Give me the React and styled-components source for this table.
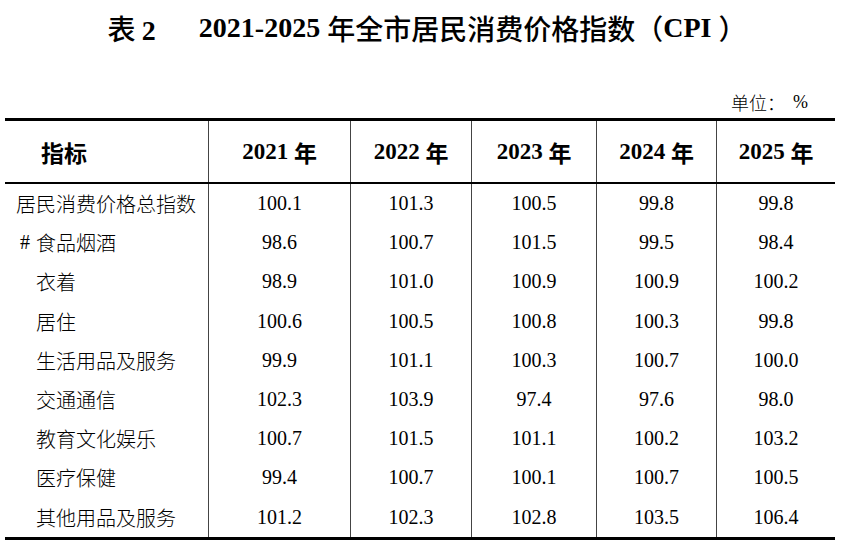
import React from 'react'
import styled, { createGlobalStyle } from 'styled-components'

const GlobalStyle = createGlobalStyle`
  html, body {
    margin: 0;
    padding: 0;
    background: #fff;
  }
  body {
    font-family: "Noto Sans CJK SC", sans-serif;
    color: #000;
  }
`

const COLS = '203px 142px 121px 125px 120px 119px'

const Page = styled.div`
  width: 852px;
  height: 541px;
  box-sizing: border-box;
  padding: 0 17px 0 5px;
  overflow: hidden;
`

const Title = styled.h1`
  margin: 0;
  height: 60px;
  box-sizing: border-box;
  padding: 0 0 4px 14px;
  display: flex;
  align-items: center;
  justify-content: center;
  font-family: "Noto Sans CJK SC", sans-serif;
  font-size: 28px;
  font-weight: 500;
  white-space: pre;
`

const Latin = styled.span`
  font-family: "Liberation Serif", serif;
  font-weight: ${p => (p.$bold ? 700 : 400)};
`

const TableNo = styled.span`
  margin-right: 43px;
`

const Unit = styled.div`
  height: 58px;
  box-sizing: border-box;
  display: flex;
  justify-content: flex-end;
  align-items: flex-end;
  padding: 0 27px 5px 0;
  font-size: 18px;
  font-weight: 300;
  line-height: 22px;

  ${Latin} {
    margin-left: 8px;
  }
`

const Table = styled.div`
  border-top: 3px solid #000;
  border-bottom: 3px solid #000;
`

const HeadRow = styled.div`
  display: grid;
  grid-template-columns: ${COLS};
  height: 63px;
  box-sizing: border-box;
  border-bottom: 2px solid #000;
`

const Row = styled.div`
  display: grid;
  grid-template-columns: ${COLS};
  height: 39.2px;
`

const Cell = styled.div`
  display: flex;
  align-items: center;
  justify-content: center;
  border-left: 1px solid #444;
  white-space: pre;

  &:first-child {
    border-left: none;
  }
`

const HeadCell = styled(Cell)`
  font-size: 23px;
  font-weight: 700;
`

const HeadLabel = styled(HeadCell)`
  justify-content: flex-start;
  padding-left: 36px;
`

const Label = styled(Cell)`
  justify-content: flex-start;
  padding-left: ${p => (p.$indent ? 31 : 11)}px;
  font-size: 20px;
  font-weight: 300;
`

const Hash = styled.span`
  display: inline-block;
  width: 20px;
  box-sizing: border-box;
  padding-left: 4px;
  margin-left: -20px;
  font-family: "Liberation Serif", serif;
  font-weight: 400;
`

const Num = styled(Cell)`
  font-family: "Liberation Serif", serif;
  font-size: 20px;
`

const years = ['2021', '2022', '2023', '2024', '2025']

const rows = [
  ['居民消费价格总指数', 0, ['100.1', '101.3', '100.5', '99.8', '99.8']],
  ['食品烟酒', 2, ['98.6', '100.7', '101.5', '99.5', '98.4']],
  ['衣着', 1, ['98.9', '101.0', '100.9', '100.9', '100.2']],
  ['居住', 1, ['100.6', '100.5', '100.8', '100.3', '99.8']],
  ['生活用品及服务', 1, ['99.9', '101.1', '100.3', '100.7', '100.0']],
  ['交通通信', 1, ['102.3', '103.9', '97.4', '97.6', '98.0']],
  ['教育文化娱乐', 1, ['100.7', '101.5', '101.1', '100.2', '103.2']],
  ['医疗保健', 1, ['99.4', '100.7', '100.1', '100.7', '100.5']],
  ['其他用品及服务', 1, ['101.2', '102.3', '102.8', '103.5', '106.4']],
]

export default function App() {
  return (
    <Page>
      <GlobalStyle />
      <Title>
        <TableNo>
          表 <Latin $bold>2</Latin>
        </TableNo>
        <Latin $bold>2021-2025 </Latin>年全市居民消费价格指数（<Latin $bold>CPI </Latin>）
      </Title>

      <Unit>
        单位：<Latin>%</Latin>
      </Unit>

      <Table>
        <HeadRow>
          <HeadLabel>指标</HeadLabel>
          {years.map(y => (
            <HeadCell key={y}>
              <Latin $bold>{y} </Latin>年
            </HeadCell>
          ))}
        </HeadRow>

        {rows.map(([name, level, values]) => (
          <Row key={name}>
            <Label $indent={level > 0}>
              {level === 2 && <Hash>#</Hash>}
              {name}
            </Label>
            {values.map((v, i) => (
              <Num key={i}>{v}</Num>
            ))}
          </Row>
        ))}
      </Table>
    </Page>
  )
}
